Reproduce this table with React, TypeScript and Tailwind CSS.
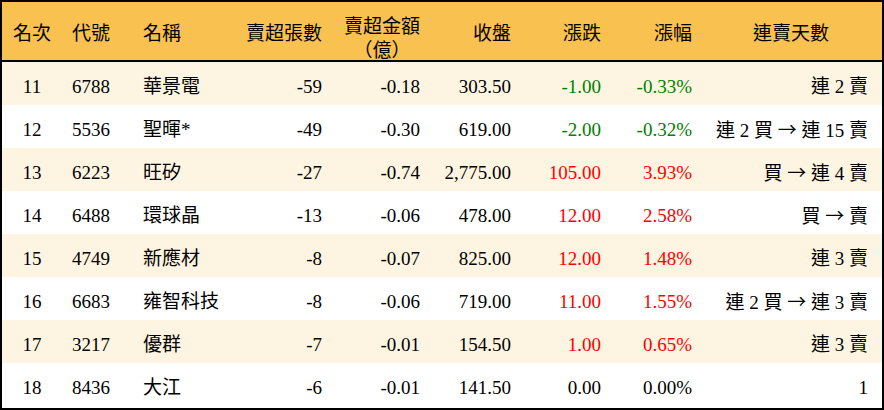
import React from 'react'

type Row = {
  rank: number
  code: string
  name: string
  lots: string
  amount: string
  close: string
  change: string
  pct: string
  streak: string
}

const rows: Row[] = [
  { rank: 11, code: '6788', name: '華景電', lots: '-59', amount: '-0.18', close: '303.50', change: '-1.00', pct: '-0.33%', streak: '連 2 賣' },
  { rank: 12, code: '5536', name: '聖暉*', lots: '-49', amount: '-0.30', close: '619.00', change: '-2.00', pct: '-0.32%', streak: '連 2 買 → 連 15 賣' },
  { rank: 13, code: '6223', name: '旺矽', lots: '-27', amount: '-0.74', close: '2,775.00', change: '105.00', pct: '3.93%', streak: '買 → 連 4 賣' },
  { rank: 14, code: '6488', name: '環球晶', lots: '-13', amount: '-0.06', close: '478.00', change: '12.00', pct: '2.58%', streak: '買 → 賣' },
  { rank: 15, code: '4749', name: '新應材', lots: '-8', amount: '-0.07', close: '825.00', change: '12.00', pct: '1.48%', streak: '連 3 賣' },
  { rank: 16, code: '6683', name: '雍智科技', lots: '-8', amount: '-0.06', close: '719.00', change: '11.00', pct: '1.55%', streak: '連 2 買 → 連 3 賣' },
  { rank: 17, code: '3217', name: '優群', lots: '-7', amount: '-0.01', close: '154.50', change: '1.00', pct: '0.65%', streak: '連 3 賣' },
  { rank: 18, code: '8436', name: '大江', lots: '-6', amount: '-0.01', close: '141.50', change: '0.00', pct: '0.00%', streak: '1' },
]

const cols = 'grid grid-cols-[60px_58px_110px_100px_98px_91px_90px_91px_182px]'

function tone(v: string) {
  if (v.startsWith('-')) return 'text-[#008000]'
  if (parseFloat(v.replace(/,/g, '')) > 0) return 'text-[#ff0000]'
  return 'text-black'
}

// arrow drawn from the CJK font so it comes out full width
function Streak({ text }: { text: string }) {
  const parts = text.split('→')
  return (
    <>
      {parts.map((p, i) => (
        <React.Fragment key={i}>
          {i > 0 && <span style={{ fontFamily: '"Noto Sans CJK TC", sans-serif' }}>→</span>}
          {p}
        </React.Fragment>
      ))}
    </>
  )
}

export default function App() {
  return (
    <div
      className="w-[884px] h-[410px] bg-white border-2 border-black text-[19px] text-black"
      style={{ fontFamily: '"Liberation Serif", "Noto Sans CJK TC", serif' }}
    >
      {/* header */}
      <div className={`${cols} h-[60px] bg-[#f9c14f] border-b-2 border-black items-center`}>
        <div className="text-center">名次</div>
        <div className="text-center">代號</div>
        <div className="pl-[23px]">名稱</div>
        <div className="text-right pr-[8px]">賣超張數</div>
        <div className="text-right pr-[8px] mt-[14px]">
          <span className="inline-block text-center leading-[22px]">
            賣超金額
            <br />
            <span style={{ fontFamily: '"Noto Sans CJK TC", sans-serif' }}>（億）</span>
          </span>
        </div>
        <div className="text-right pr-[8px]">收盤</div>
        <div className="text-right pr-[8px]">漲跌</div>
        <div className="text-right pr-[8px]">漲幅</div>
        <div className="text-center">連賣天數</div>
      </div>

      {/* rows */}
      {rows.map((r, i) => (
        <div
          key={r.rank}
          className={`${cols} h-[43px] pt-[7px] items-center ${i % 2 === 0 ? 'bg-[#fdf5e1]' : 'bg-white'}`}
        >
          <div className="text-center">{r.rank}</div>
          <div className="text-center">{r.code}</div>
          <div className="pl-[23px] whitespace-nowrap">{r.name}</div>
          <div className="text-right pr-[8px]">{r.lots}</div>
          <div className="text-right pr-[8px]">{r.amount}</div>
          <div className="text-right pr-[8px]">{r.close}</div>
          <div className={`text-right pr-[8px] ${tone(r.change)}`}>{r.change}</div>
          <div className={`text-right pr-[8px] ${tone(r.pct)}`}>{r.pct}</div>
          <div className="text-right pr-[14px] whitespace-nowrap">
            <Streak text={r.streak} />
          </div>
        </div>
      ))}
    </div>
  )
}
